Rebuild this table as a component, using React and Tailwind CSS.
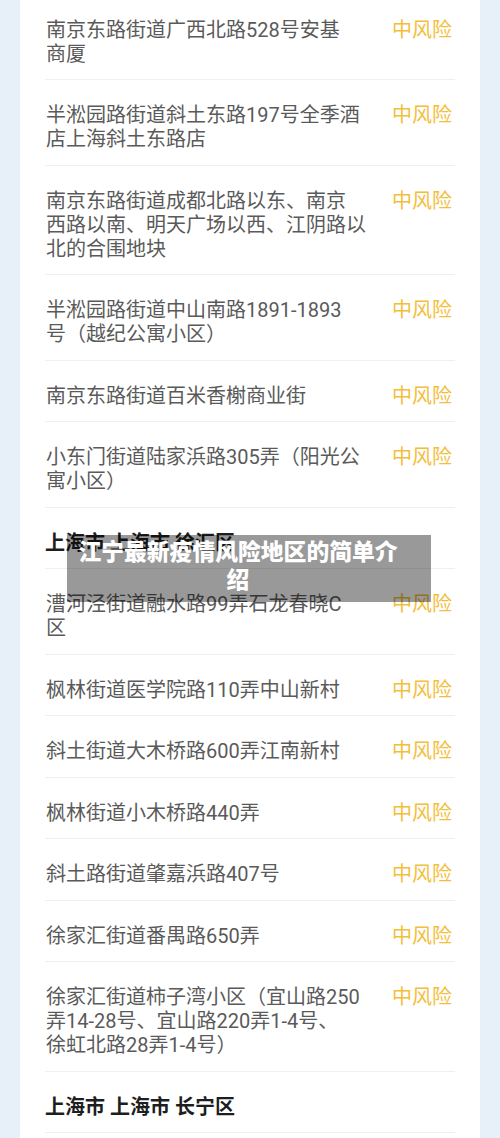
import React from 'react';

const rows = [
  { lines: ['南京东路街道广西北路528号安基', '商厦'] },
  { lines: ['半淞园路街道斜土东路197号全季酒', '店上海斜土东路店'] },
  { lines: ['南京东路街道成都北路以东、南京', '西路以南、明天广场以西、江阴路以', '北的合围地块'] },
  { lines: ['半淞园路街道中山南路1891-1893', '号（越纪公寓小区）'] },
  { lines: ['南京东路街道百米香榭商业街'] },
  { lines: ['小东门街道陆家浜路305弄（阳光公', '寓小区）'] },
  { header: '上海市 上海市 徐汇区' },
  { lines: ['漕河泾街道融水路99弄石龙春晓C', '区'] },
  { lines: ['枫林街道医学院路110弄中山新村'] },
  { lines: ['斜土街道大木桥路600弄江南新村'] },
  { lines: ['枫林街道小木桥路440弄'] },
  { lines: ['斜土路街道肇嘉浜路407号'] },
  { lines: ['徐家汇街道番禺路650弄'] },
  { lines: ['徐家汇街道柿子湾小区（宜山路250', '弄14-28号、宜山路220弄1-4号、', '徐虹北路28弄1-4号）'] },
  { header: '上海市 上海市 长宁区' },
];

const font = "font-['Roboto','Noto_Sans_CJK_SC',sans-serif]";

const Row = ({ row, first }) => (
  <div
    className={`mx-[25px] flex items-start justify-between border-b border-[#efefef] pb-[13.5px] ${
      first ? 'pt-[17.5px]' : 'pt-[23px]'
    }`}
  >
    {row.header ? (
      <div className="text-[20px] leading-[24px] font-bold text-[#1e1e1e] whitespace-pre">{row.header}</div>
    ) : (
      <>
        <div className="pl-[1px] text-[20px] leading-[24px] text-[#5a5a5a]">
          {row.lines.map((l, i) => (
            <div key={i} className="whitespace-nowrap">{l}</div>
          ))}
        </div>
        <div className="pr-[3px] text-[20px] leading-[24px] text-[#f3be3a] whitespace-nowrap">中风险</div>
      </>
    )}
  </div>
);

export default function App() {
  return (
    <div className={`relative h-[1138px] overflow-hidden bg-[#e7f0f8] px-[20px] ${font}`}>
      <div className="h-full bg-white">
        {rows.map((row, i) => (
          <Row key={i} row={row} first={i === 0} />
        ))}
      </div>

      {/* title overlay */}
      <div className="absolute left-[67px] top-[535px] w-[364px] h-[67px] bg-black/40 pl-[11px] pr-[33px] pt-[2px] text-center">
        <div className="text-[22.8px] leading-[28px] font-black text-white font-['Noto_Sans_CJK_SC',sans-serif]">
          江宁最新疫情风险地区的简单介
          <br />
          绍
        </div>
      </div>
    </div>
  );
}
